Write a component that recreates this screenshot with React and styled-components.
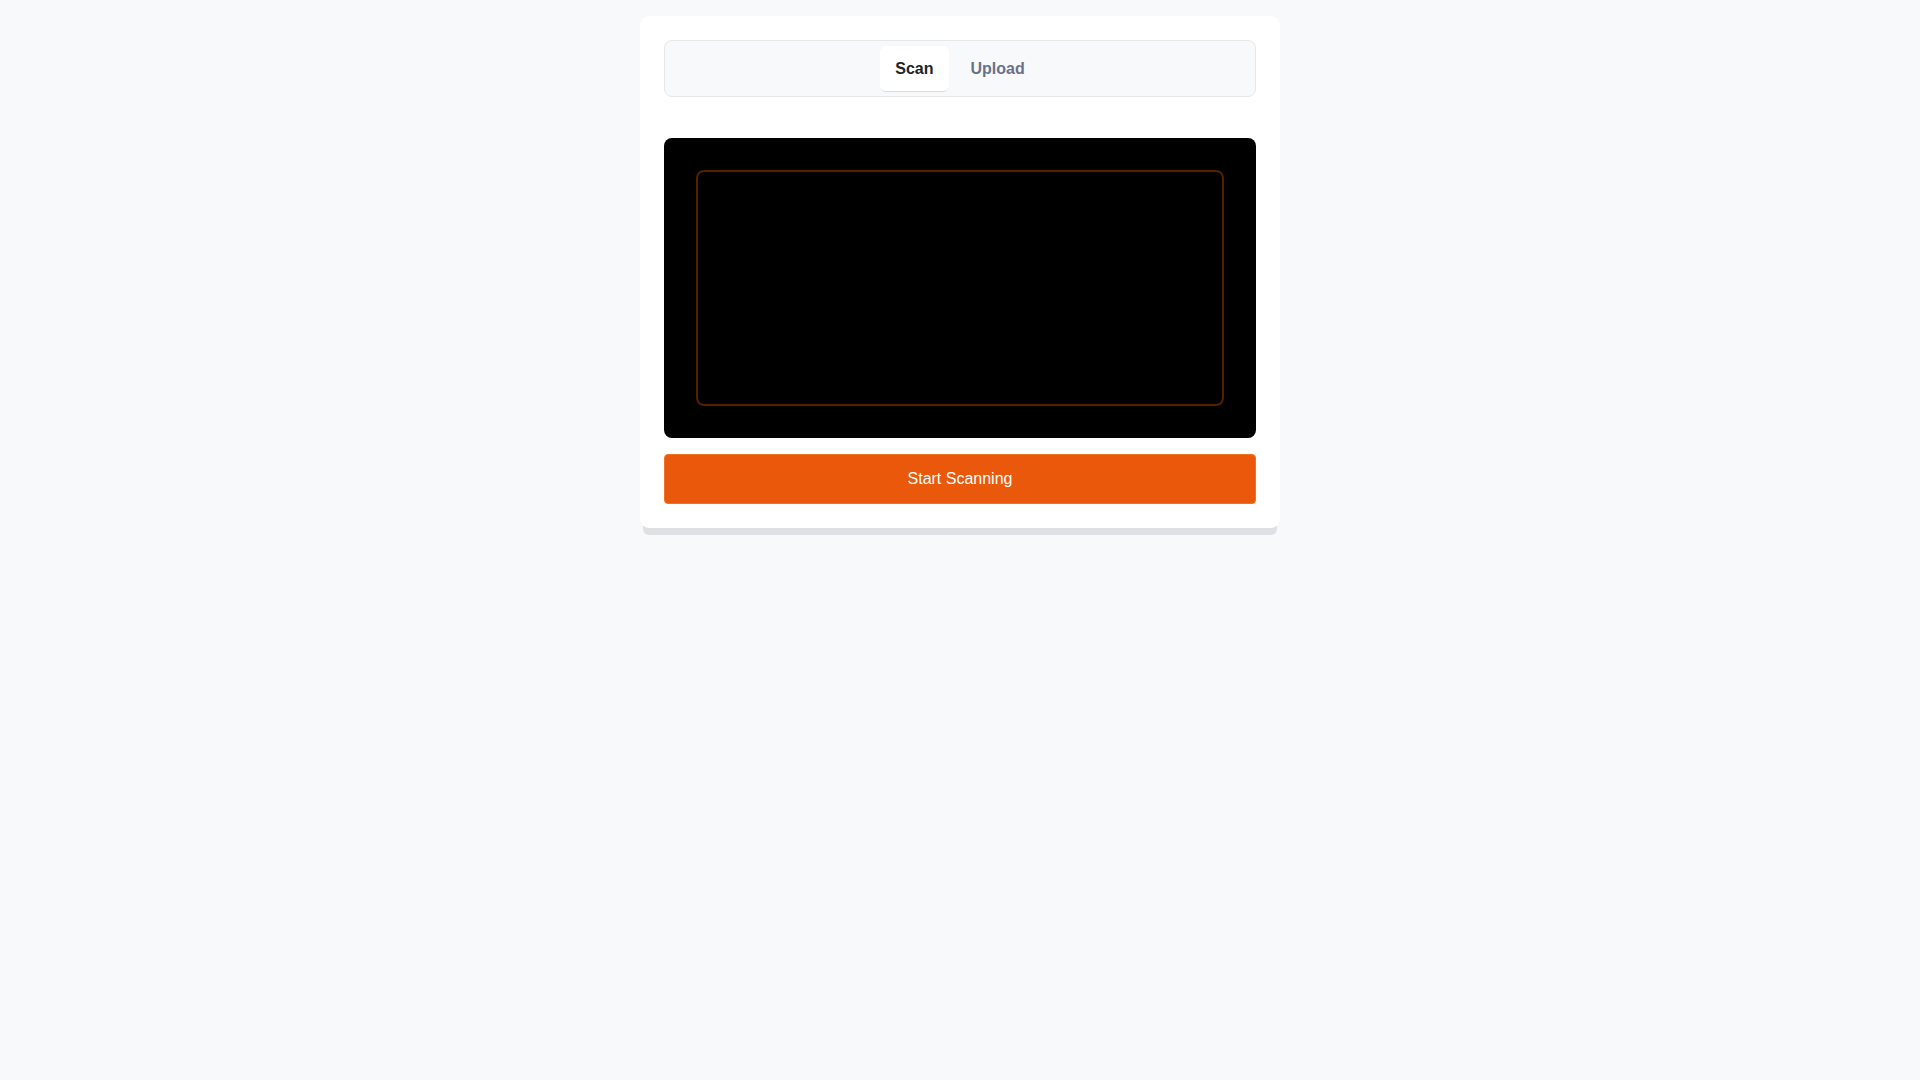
import { useState } from "react";
import styled, { createGlobalStyle } from "styled-components";

const GlobalStyle = createGlobalStyle`
  html, body {
    margin: 0;
    padding: 0;
    background: #f8f9fb;
    font-family: "Liberation Sans", Arial, sans-serif;
  }
`;

const Page = styled.div`
  min-height: 100vh;
  display: flex;
  flex-direction: column;
  align-items: center;
  padding-top: 16px;
  box-sizing: border-box;
`;

const Card = styled.div`
  width: 640px;
  box-sizing: border-box;
  background: #ffffff;
  border-radius: 9px;
  padding: 24px;
  box-shadow: 0 10px 0 -3px #dfe0e3;
`;

const TabList = styled.div`
  height: 57px;
  box-sizing: border-box;
  display: flex;
  align-items: center;
  justify-content: center;
  gap: 7px;
  background: #f8f9fb;
  border: 1px solid #e5e7eb;
  border-radius: 8px;
  margin-bottom: 41px;
`;

const Tab = styled.button`
  height: 45px;
  padding: 0 15px;
  border: none;
  border-radius: 6px;
  font-family: inherit;
  font-size: 16px;
  font-weight: 700;
  cursor: pointer;
  background: ${(p) => (p.$active ? "#ffffff" : "transparent")};
  color: ${(p) => (p.$active ? "#1f2328" : "#687289")};
  box-shadow: ${(p) => (p.$active ? "0 2px 1px -1px #d8dadf" : "none")};
`;

const Viewer = styled.div`
  height: 300px;
  background: #000000;
  border-radius: 8px;
  padding: 32px;
  box-sizing: border-box;
  margin-bottom: 16px;
`;

const Frame = styled.div`
  height: 100%;
  box-sizing: border-box;
  border: 2px solid rgba(234, 88, 12, 0.36);
  border-radius: 8px;
`;

const ScanButton = styled.button`
  width: 100%;
  height: 50px;
  border: 1px solid #f1731f;
  border-radius: 4px;
  background: #ea580c;
  color: #ffffff;
  font-family: inherit;
  font-size: 16px;
  cursor: pointer;
`;

const App = () => {
  const [tab, setTab] = useState("scan");
  return (
    <Page>
      <GlobalStyle />
      <Card>
        <TabList>
          <Tab $active={tab === "scan"} onClick={() => setTab("scan")}>
            Scan
          </Tab>
          <Tab $active={tab === "upload"} onClick={() => setTab("upload")}>
            Upload
          </Tab>
        </TabList>
        <Viewer>
          <Frame />
        </Viewer>
        <ScanButton>Start Scanning</ScanButton>
      </Card>
    </Page>
  );
};

export default App;
